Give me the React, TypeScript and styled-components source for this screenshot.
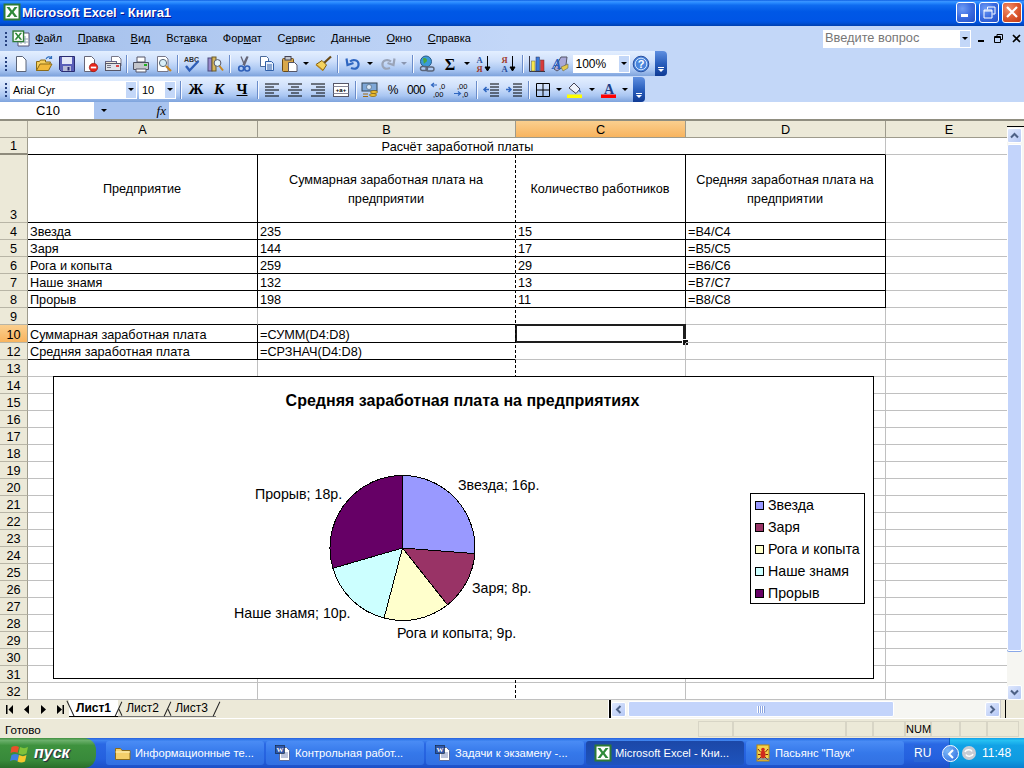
import React from "react";
import styled, { createGlobalStyle } from "styled-components";

const Global = createGlobalStyle`
  html, body { margin: 0; padding: 0; background: #ece9d8; }
  #root { width: 1024px; height: 768px; overflow: hidden; }
  * { box-sizing: border-box; }
`;

const Window = styled.div`
  width: 1024px; height: 768px; display: flex; flex-direction: column;
  font-family: "Liberation Sans", Arial, sans-serif; color: #000; overflow: hidden;
`;

/* ---------- title bar ---------- */
const TitleBar = styled.div`
  height: 26px; flex: none; display: flex; align-items: center; padding: 0 2px 2px 3px;
  background: linear-gradient(180deg, #0a5be0 0%, #3a93ff 5%, #2a8cff 10%, #0f6cf0 20%, #0058e6 45%, #0055e5 80%, #0050d8 88%, #0040b0 100%);
`;
const TitleText = styled.div`
  margin-left: 1px; color: #fff; font: bold 13px "Liberation Sans", sans-serif; letter-spacing: -0.1px;
  text-shadow: 1px 1px 0 #0f1089; white-space: nowrap;
`;
const TitleButtons = styled.div`
  margin-left: auto; display: flex; gap: 3px;
`;
const WinBtn = styled.div<{ $close?: boolean }>`
  width: 20px; height: 21px; border: 1px solid #fff; border-radius: 3px; display: flex; align-items: center; justify-content: center;
  background: ${(p) => (p.$close
    ? "radial-gradient(circle at 30% 30%, #f09070, #dd5a30 50%, #c03a14 100%)"
    : "radial-gradient(circle at 30% 30%, #6f9cf5, #3a6be0 50%, #2350c8 100%)")};
`;

/* ---------- menu + toolbars ---------- */
const CommandArea = styled.div`
  height: 76px; flex: none; display: flex; flex-direction: column;
  background: linear-gradient(90deg, #a3bfeb 0%, #c3d7f8 50%, #c3d7f8 100%);
`;
const MenuBar = styled.div`
  height: 25px; flex: none; display: flex; align-items: center; padding-left: 5px;
`;
const Grip = styled.div`
  width: 2px; height: 14px; margin-right: 2px; flex: none;
  background: repeating-linear-gradient(180deg, #27417e 0 2px, transparent 2px 4px);
`;
const MenuLogo = styled.div`
  width: 18px; height: 18px; margin-left: 3px; margin-right: 5px; flex: none; display: flex;
`;
const MenuItem = styled.span`
  font-size: 11px; margin: -2px 15.7px 0 0; white-space: nowrap;
`;
const SearchBox = styled.div`
  margin-left: auto; width: 148px; height: 18px; background: #fff; display: flex; align-items: center;
  font-size: 12.8px; color: #777; padding-left: 2px;
`;
const SearchLabel = styled.span`
  margin-top: -2px;
`;
const ComboBtn = styled.div<{ $w?: number }>`
  margin-left: auto; width: ${(p) => p.$w ?? 12}px; height: 100%; background: #c3d7f8; border: 1px solid #fff;
  display: flex; align-items: center; justify-content: center; flex: none;
`;
const MdiButtons = styled.div`
  width: 53px; display: flex; justify-content: space-between; align-items: center; padding: 0 3px 0 6px; flex: none;
`;
const Toolbar = styled.div<{ $w: number; $h: number }>`
  width: ${(p) => p.$w}px; height: ${(p) => p.$h}px; flex: none; display: flex; align-items: center; padding-left: 5px;
  margin-bottom: 1px;
  border-radius: 0 4px 4px 0;
  background: linear-gradient(180deg, #e3efff 0%, #cfe0fb 40%, #a9c6f2 75%, #7ea3dc 100%);
`;
const ToolBtn = styled.div<{ $w?: number }>`
  width: ${(p) => p.$w ?? 23}px; height: 100%; flex: none; display: flex; align-items: center; justify-content: center;
`;
const GlyphBtn = styled(ToolBtn)<{ $bold?: boolean; $italic?: boolean; $under?: boolean }>`
  font: ${(p) => (p.$italic ? "italic " : "")}bold 15px "Liberation Serif", serif;
  text-decoration: ${(p) => (p.$under ? "underline" : "none")};
`;
const SymbolBtn = styled(ToolBtn)<{ $track?: number }>`
  font-size: 12px; letter-spacing: ${(p) => p.$track ?? 0}px; white-space: nowrap;
`;
const Sep = styled.div<{ $w?: number }>`
  width: ${(p) => p.$w ?? 6}px; height: 100%; flex: none; display: flex; align-items: center; justify-content: center;
  &::before { content: ""; width: 1px; height: 18px; background: #6a8cca; box-shadow: 1px 0 0 #f4f8ff; }
`;
const Arrow = styled.span<{ $c?: string }>`
  width: 0; height: 0; border-left: 3px solid transparent; border-right: 3px solid transparent;
  border-top: 3px solid ${(p) => p.$c ?? "#000"}; display: block; flex: none;
`;
const Combo = styled.div<{ $w: number; $ml?: number; $size?: number }>`
  width: ${(p) => p.$w}px; margin-left: ${(p) => p.$ml ?? 0}px; height: 18px; flex: none; background: #fff; display: flex; align-items: center;
  font-size: ${(p) => p.$size ?? 12}px; padding-left: 3px;
`;
const EndCap = styled.div`
  margin-left: auto; width: 12px; height: 100%; flex: none; border-radius: 0 4px 4px 0; display: flex; flex-direction: column; align-items: center; justify-content: flex-end; padding-bottom: 4px; gap: 1px;
  background: linear-gradient(180deg, #5f8fe0 0%, #2a5fbd 50%, #0f3a94 100%);
  &::before { content: ""; width: 6px; height: 1px; background: #fff; }
`;

/* ---------- name box ---------- */
const FormulaRow = styled.div`
  height: 17px; flex: none; display: flex; background: #fff;
`;
const NameBox = styled.div`
  width: 92px; margin-left: 2px; text-align: center; font-size: 13px; line-height: 17px;
`;
const NameDrop = styled.div`
  width: 75px; background: #a8c3ef; display: flex; align-items: center; padding-left: 7px; justify-content: space-between; padding-right: 3px;
`;
const Fx = styled.span`
  font: italic 13px "Liberation Serif", serif;
`;

/* ---------- sheet ---------- */
const SheetArea = styled.div`
  height: 581px; flex: none; display: flex; border-top: 2px solid #908e80; background: #fff;
`;
const Sheet = styled.div`
  width: 1007px; position: relative; flex: none; overflow: hidden;
  display: grid; grid-template-columns: 28px 230px 258px 170px 200px 127px; align-content: start;
  font-size: 12.7px;
`;
const Corner = styled.div`
  height: 17px; background: #ece9d8; border-right: 1px solid #aca899; border-bottom: 1px solid #aca899;
`;
const ColHead = styled.div<{ $on?: boolean }>`
  height: 17px; text-align: center; line-height: 18px; color: #000;
  background: ${(p) => (p.$on ? "linear-gradient(180deg,#fbcf8e,#f8b45f)" : "#ece9d8")};
  border-right: 1px solid #9e9b8c; border-bottom: 1px solid #9e9b8c;
`;
const RowHead = styled.div<{ $h: number; $on?: boolean; $thick?: boolean }>`
  height: ${(p) => p.$h}px; text-align: center; display: flex; align-items: flex-end; justify-content: center; line-height: 14px;
  background: ${(p) => (p.$on ? "linear-gradient(180deg,#fbcf8e,#f8b45f)" : "#ece9d8")};
  border-right: 1px solid #9e9b8c; border-bottom: ${(p) => (p.$thick ? "2px solid #8e8b7c" : "1px solid #b8b5a6")};
`;
const Cell = styled.div<{ $h: number; $r: string; $b: string; $span?: number; $center?: boolean; $mid?: boolean; $sel?: boolean }>`
  height: ${(p) => p.$h}px; border-right: 1px solid ${(p) => p.$r}; border-bottom: 1px solid ${(p) => p.$b};
  ${(p) => (p.$span ? `grid-column: span ${p.$span};` : "")}
  display: flex; overflow: visible; white-space: nowrap; line-height: 14px; padding-left: 2px;
  align-items: ${(p) => (p.$center ? "center" : "flex-end")};
  ${(p) => (p.$mid ? "justify-content: center;" : "")}
  ${(p) => (p.$center ? "justify-content: center; text-align: center; white-space: normal; padding: 2px 9px 0 8px; line-height: 19px;" : "")}
  position: relative;
  ${(p) => (p.$sel ? `
    &::before { content: ""; position: absolute; left: -1px; top: -1px; right: -1px; bottom: -1px; border: 2px solid #1e1e1e; border-right-width: 3px; border-bottom-width: 2px; }
    &::after { content: ""; position: absolute; right: -3px; bottom: -3px; width: 5px; height: 5px; background: #111; border: 1px solid #fff; border-right: 0; border-bottom: 0; }
  ` : "")}
`;
const PageBreak = styled.div`
  position: absolute; left: 515px; top: 34px; bottom: 0; width: 1px;
  background: repeating-linear-gradient(180deg, #000 0 3px, transparent 3px 5px);
`;
const ChartPanel = styled.div`
  position: absolute; left: 53px; top: 255px; width: 821px; height: 303px; background: #fff; border: 1px solid #000; display: flex;
`;

/* scrollbars */
const VScroll = styled.div`
  width: 17px; flex: none; display: flex; flex-direction: column; background: #f6f6f2; padding-right: 2px;
`;
const VSplit = styled.div`
  height: 6px; flex: none; background: #ece9d8; border-bottom: 1px solid #000; margin: 0 -2px 1px 0;
`;
const ScrollBtn = styled.div`
  width: 15px; height: 15px; flex: none; background: linear-gradient(135deg, #dfe8fd, #b5c8f5); border: 1px solid #fff; border-radius: 2px; display: flex; align-items: center; justify-content: center;
`;
const VThumb = styled.div`
  height: 507px; width: 15px; flex: none; margin-top: 1px; background: #c3d4fb; border: 1px solid #fff; border-radius: 2px; box-shadow: 0 1px 0 #8aa8e8;
`;
const VTrack = styled.div`
  flex: 1;
`;

/* tabs */
const TabStrip = styled.div`
  height: 18px; flex: none; display: flex; align-items: stretch; background: #ece9d8;
`;
const TabNav = styled.div`
  width: 67px; flex: none; display: flex; align-items: center; padding-left: 6px; gap: 8.5px;
`;
const Tabs = styled.div`
  display: flex; align-items: flex-start; width: 542px; flex: none;
`;
const Tab = styled.div<{ $on?: boolean }>`
  position: relative; height: 17px; display: flex; align-items: center; justify-content: center;
  width: 49px; font-size: 12px; font-weight: ${(p) => (p.$on ? 700 : 400)};
  margin-left: ${(p) => (p.$on ? 2 : 0)}px;
  background: ${(p) => (p.$on ? "#fff" : "transparent")};
  border-bottom: 1px solid ${(p) => (p.$on ? "#000" : "#777")};
  &::before {
    content: ""; position: absolute; width: 1px; background: #222; transform: rotate(-25deg);
    left: ${(p) => (p.$on ? 1 : 2)}px; top: ${(p) => (p.$on ? 0 : 9)}px; height: ${(p) => (p.$on ? 17 : 7)}px;
  }
  &::after { content: ""; position: absolute; right: -1px; top: 1px; height: 16px; width: 1px; background: #222; transform: rotate(25deg); z-index: 1; }
`;
const Splitter = styled.div`
  width: 2px; flex: none; background: #000; box-shadow: -1px 0 0 #fff;
`;
const HScroll = styled.div`
  width: 389px; flex: none; display: flex; align-items: center; background: #f6f6f2; padding: 1px 0;
`;
const HThumb = styled.div`
  width: 266px; height: 100%; flex: none; margin-left: 2px; background: #c3d4fb; border: 1px solid #fff; border-radius: 2px; display: flex; align-items: center; justify-content: center;
`;
const HGrip = styled.div`
  width: 8px; height: 7px; background: repeating-linear-gradient(90deg, #fff 0 1px, #8aa4e0 1px 2px);
`;
const HFill = styled.div`
  flex: 1;
`;
const TabEnd = styled.div`
  width: 6px; flex: none; border-right: 1px solid #000; border-left: 1px solid #ccc;
`;

/* status */
const StatusBar = styled.div`
  height: 20px; flex: none; display: flex; align-items: center; background: #ece9d8; border-top: 1px solid #fff; font-size: 11.6px;
  padding: 2px 3px 1px 5px;
`;
const StatusText = styled.div`
  width: 693px; flex: none;
`;
const StatusCell = styled.div<{ $w: number }>`
  width: ${(p) => p.$w}px; height: 16px; flex: none; border: 1px solid #d8d5c6; font-size: 11px; line-height: 14px; padding-left: 0;
`;

/* task bar */
const TaskBar = styled.div`
  height: 30px; flex: none; display: flex; align-items: center; position: relative;
  background: linear-gradient(180deg, #2660dc 0%, #3f84f0 8%, #2a68e4 20%, #2460de 70%, #1d4fc6 100%);
`;
const StartBtn = styled.div`
  width: 96px; height: 30px; flex: none; display: flex; align-items: center; padding-left: 10px; gap: 5px; border-radius: 0 12px 12px 0;
  background: linear-gradient(180deg, #3f8f3f 0%, #6bb06b 8%, #3e923e 25%, #38893a 75%, #2a6e2a 100%);
  color: #fff; font: italic bold 16px "Liberation Sans", sans-serif; text-shadow: 1px 1px 1px #224;
`;
const TaskBtns = styled.div`
  display: flex; margin-left: 10px; gap: 2px;
`;
const TaskBtn = styled.div<{ $on?: boolean }>`
  width: 158px; height: 24px; flex: none; display: flex; align-items: center; gap: 3px; padding-left: 8px; border-radius: 3px;
  color: #fff; font-size: 11.2px; white-space: nowrap; overflow: hidden;
  background: ${(p) => (p.$on ? "linear-gradient(180deg,#1c48a8,#1e54bd)" : "linear-gradient(180deg,#4a8cf5,#3578ea 50%,#3270e2)")};
`;
const Lang = styled.div`
  position: absolute; left: 914px; top: 7px; width: 16px; height: 17px; background: #2a66d6; color: #fff; font-size: 12px; line-height: 17px; text-align: center;
`;
const Tray = styled.div`
  margin-left: auto; width: 75px; height: 30px; flex: none; display: flex; align-items: center; padding-left: 11px; gap: 5px; color: #fff; font-size: 12px; position: relative;
  background: linear-gradient(180deg, #12a0e8 0%, #26c0f2 8%, #12a2e6 25%, #0f9be0 75%, #0a7fcf 100%);
  border-left: 1px solid #0a5fc0;
`;
const TrayChevron = styled.div`
  position: absolute; left: -8px; top: 7px; width: 17px; height: 17px; border-radius: 50%; border: 1px solid #fff; display: flex; align-items: center; justify-content: center;
  background: radial-gradient(circle at 30% 30%, #7db8f8, #2a6be0);
`;

/* ---------- icons ---------- */
const Svg = ({ s = 18, children }: { s?: number; children: React.ReactNode }) => (
  <svg width={s} height={s} viewBox="0 0 18 18">{children}</svg>
);
const XL = () => (
  <>
    <rect x="1.5" y="1.5" width="15" height="15" fill="#fff" stroke="#2f7a36" strokeWidth="2" />
    <path d="M3.5 4h3l2.5 3.5L11.5 4h3L10.6 9l3.900 5h-3L9 10.600 6.500 14h-3l3.900-5z" fill="#2f8a3a" />
  </>
);
const Icons: Record<string, React.ReactNode> = {
  new: <path d="M4.500 1.500h6l3.500 3.500v11.500h-9.500z" fill="#fff" stroke="#5b6478" />,
  open: (<>
    <path d="M1.500 6.500h3l1-1.500h5v2h5l-3 8.500H1.500z" fill="#f6cf5c" stroke="#8a6a18" />
    <path d="M5 9h12l-3.500 6.500H1.500z" fill="#f2b93b" stroke="#8a6a18" />
    <path d="M11 4c1.500-2.500 3.500-2.500 5-1.500M16.500 1v2.500H14" fill="none" stroke="#2f6fbe" strokeWidth="1.200" />
  </>),
  save: (<>
    <path d="M1.500 1.500h15v15h-13l-2-2z" fill="#5a5fb8" stroke="#2a2c70" />
    <rect x="4" y="2" width="10" height="7" fill="#e4e8f8" />
    <rect x="5" y="11" width="8" height="5" fill="#b8bcd8" />
    <rect x="9.500" y="12" width="2" height="3.500" fill="#2a2c70" />
  </>),
  perm: (<>
    <path d="M3.500 1.500h7l3 3v12h-10z" fill="#fff" stroke="#667" />
    <circle cx="12.500" cy="12.500" r="4.200" fill="#e8261c" stroke="#901008" strokeWidth=".6" />
    <rect x="9.800" y="11.600" width="5.400" height="1.800" fill="#fff" />
  </>),
  mail: (<>
    <path d="M7.500 1.500h7l2.500 2.500v7h-9.500z" fill="#fff" stroke="#778" />
    <rect x="1.500" y="6.500" width="11" height="8" fill="#eee8d8" stroke="#668" />
    <rect x="1.500" y="8.500" width="15" height="7" fill="#dfe3ea" stroke="#556" />
    <path d="M3 10.500h4M3 12.500h4" stroke="#778" />
    <rect x="12" y="10" width="3" height="2" fill="#d44" />
  </>),
  print: (<>
    <path d="M5 2h8v5H5z" fill="#fff" stroke="#556" />
    <path d="M1.500 7.500h15v7h-15z" fill="#c4c6cc" stroke="#4c5060" />
    <path d="M4 14h10v3H4z" fill="#fff" stroke="#556" />
    <rect x="12" y="9" width="3" height="2" fill="#22b022" />
  </>),
  preview: (<>
    <path d="M2.500 1.500h8l2.500 2.500v12.500H2.500z" fill="#fff" stroke="#778" />
    <circle cx="8" cy="8" r="3.600" fill="#d8eef8" stroke="#567" />
    <path d="M11 11l5 5" stroke="#c8861e" strokeWidth="2.200" />
  </>),
  spell: (<>
    <text x="1" y="6.500" fontSize="7" fontWeight="700" fill="#333" fontFamily="Liberation Sans">ABC</text>
    <path d="M3 11l3.500 4.500L15.500 6" fill="none" stroke="#2f5fb8" strokeWidth="2.400" />
  </>),
  research: (<>
    <rect x="2" y="3" width="4" height="13" fill="#9a8acc" stroke="#4a4a7a" />
    <rect x="6" y="2" width="4" height="14" fill="#d4b45c" stroke="#6a5a2a" />
    <circle cx="11.500" cy="8" r="3.400" fill="#e4f4fa" stroke="#556" />
    <path d="M13.500 11l3.500 4.500" stroke="#c8861e" strokeWidth="2" />
  </>),
  cut: (<>
    <path d="M6 1.500l3.500 8.500L13 1.500M12 1.500L8 10" fill="none" stroke="#667" strokeWidth="1.300" />
    <circle cx="6.200" cy="13.500" r="2.500" fill="none" stroke="#2f5fb8" strokeWidth="1.600" />
    <circle cx="12.200" cy="13.500" r="2.500" fill="none" stroke="#2f5fb8" strokeWidth="1.600" />
  </>),
  copy: (<>
    <path d="M2.500 1.500h6l2 2v8h-8z" fill="#fff" stroke="#4a6a9a" />
    <path d="M7.500 6.500h6l2 2v7h-8z" fill="#e8f0fc" stroke="#2f5fa8" />
    <path d="M9 10h5M9 12h5M9 14h5" stroke="#2f5fa8" />
  </>),
  paste: (<>
    <rect x="1.500" y="3.500" width="11" height="13" rx="1" fill="#d8a84c" stroke="#6a4a14" />
    <rect x="4" y="1.500" width="6" height="3.500" fill="#c4c8d0" stroke="#445" />
    <path d="M7.500 7.500h6l2.500 2.500v6.500H7.500z" fill="#fff" stroke="#556" />
  </>),
  painter: (<>
    <path d="M17 1.500L10 8" stroke="#6a4a14" strokeWidth="2.200" />
    <path d="M8 5.500L12.500 10 9 15.500 2 9.500z" fill="#f4d25c" stroke="#7a5a14" />
    <path d="M2 9.500L9 15.500" stroke="#b8861e" strokeWidth="1.500" />
  </>),
  undo: <path d="M7 13c5 2 8-.5 7.500-4.500C14 5 9 4 6 6.500M2.500 3.500l1 6.500 6-2" fill="none" stroke="#2f66c0" strokeWidth="2.200" />,
  redo: <path d="M11 13C6 15 3 12.500 3.500 8.500 4 5 9 4 12 6.500M15.500 3.500l-1 6.500-6-2" fill="none" stroke="#9aa4b8" strokeWidth="2.200" />,
  link: (<>
    <circle cx="8" cy="6.500" r="5.500" fill="#3a9ad8" stroke="#2a5a8a" />
    <path d="M5 3.500c2-1 4 0 4 2s-3 2-3 4" fill="#4aa83c" />
    <rect x="2.500" y="11.500" width="7" height="4" rx="2" fill="none" stroke="#5a6478" strokeWidth="1.400" />
    <rect x="8" y="12" width="8" height="4" rx="2" fill="none" stroke="#5a6478" strokeWidth="1.400" />
  </>),
  sigma: <text x="9" y="15" textAnchor="middle" fontSize="16" fontWeight="700" fontFamily="Liberation Serif">Σ</text>,
  az: (<>
    <text x="1.500" y="8" fontSize="8.500" fontWeight="700" fill="#2a4f9a" fontFamily="Liberation Serif">A</text>
    <text x="1.500" y="17" fontSize="8.500" fontWeight="700" fill="#a03a2a" fontFamily="Liberation Serif">Я</text>
    <path d="M12.500 1v13M10 12l2.500 4 2.500-4z" stroke="#000" />
  </>),
  za: (<>
    <text x="1.500" y="8" fontSize="8.500" fontWeight="700" fill="#a03a2a" fontFamily="Liberation Serif">Я</text>
    <text x="1.500" y="17" fontSize="8.500" fontWeight="700" fill="#2a4f9a" fontFamily="Liberation Serif">A</text>
    <path d="M12.500 1v13M10 12l2.500 4 2.500-4z" stroke="#000" />
  </>),
  chart: (<>
    <path d="M1.500 1v15.500H17" fill="none" stroke="#334" />
    <rect x="3.500" y="6" width="3.500" height="10" fill="#f8e84c" stroke="#664" strokeWidth=".5" />
    <rect x="8" y="2" width="3.500" height="14" fill="#3a7ad8" stroke="#335" strokeWidth=".5" />
    <rect x="12.500" y="5" width="3.500" height="11" fill="#d83a3a" stroke="#633" strokeWidth=".5" />
  </>),
  drawing: (<>
    <path d="M10 2h6l-1 8-9 6-3-2z" fill="#a8a8d8" stroke="#556" />
    <text x="1" y="14" fontSize="14" fontWeight="700" fontStyle="italic" fill="#2a5fbe" fontFamily="Liberation Serif">A</text>
    <path d="M10 12l7-3v4l-5 3z" fill="#e4c84c" stroke="#665" strokeWidth=".6" />
  </>),
  help: (<>
    <circle cx="9" cy="9" r="7.800" fill="#4a86dc" stroke="#2a50a0" />
    <circle cx="9" cy="9" r="5.800" fill="none" stroke="#cfe0fb" />
    <text x="9" y="13" textAnchor="middle" fontSize="11" fontWeight="700" fill="#fff" fontFamily="Liberation Sans">?</text>
  </>),
  left: <path d="M2 3h14M2 6h9M2 9h14M2 12h9M2 15h14" stroke="#000" />,
  center: <path d="M2 3h14M5 6h8M2 9h14M5 12h8M2 15h14" stroke="#000" />,
  right: <path d="M2 3h14M7 6h9M2 9h14M7 12h9M2 15h14" stroke="#000" />,
  merge: (<>
    <rect x="1.500" y="2.500" width="15" height="13" fill="#fff" stroke="#556" />
    <path d="M1.500 5.500h15M1.500 12.500h15" stroke="#889" />
    <text x="9" y="11" textAnchor="middle" fontSize="6" fontWeight="700" fontFamily="Liberation Sans">+a+</text>
  </>),
  money: (<>
    <rect x="1" y="2" width="15" height="8" fill="#7fa8d8" stroke="#345" />
    <circle cx="8" cy="6" r="2.500" fill="#d8e8f8" stroke="#345" strokeWidth=".5" />
    <ellipse cx="13" cy="11" rx="3.500" ry="1.500" fill="#f0c030" stroke="#7a5a10" strokeWidth=".7" />
    <ellipse cx="12" cy="14" rx="3.500" ry="1.500" fill="#f0c030" stroke="#7a5a10" strokeWidth=".7" />
    <path d="M2 13h5M2 15.500h5" stroke="#a06a10" strokeWidth="1.200" />
  </>),
  inc: (<>
    <path d="M7 4H2M4 2L1.500 4 4 6" fill="none" stroke="#2f66c0" strokeWidth="1.200" />
    <text x="9" y="7.500" fontSize="7.500" fontFamily="Liberation Sans">,0</text>
    <text x="3" y="16" fontSize="7.500" fontFamily="Liberation Sans">,00</text>
  </>),
  dec: (<>
    <text x="4" y="7.500" fontSize="7.500" fontFamily="Liberation Sans">,00</text>
    <path d="M1 12.500h6M5 10.500l2.500 2-2.500 2" fill="none" stroke="#2f66c0" strokeWidth="1.200" />
    <text x="9" y="16" fontSize="7.500" fontFamily="Liberation Sans">,0</text>
  </>),
  outdent: (<>
    <path d="M8 3h9M8 6h9M8 9h9M8 12h9M8 15h9" stroke="#000" />
    <path d="M7 8.500H2M4.500 6L2 8.500 4.500 11" fill="none" stroke="#2f66c0" strokeWidth="1.500" />
  </>),
  indent: (<>
    <path d="M8 3h9M8 6h9M8 9h9M8 12h9M8 15h9" stroke="#000" />
    <path d="M1 8.500h5M3.500 6L6 8.500 3.500 11" fill="none" stroke="#2f66c0" strokeWidth="1.500" />
  </>),
  borders: <path d="M2.500 2.500h13v13h-13zM9 2.500v13M2.500 9h13" fill="none" stroke="#000" />,
  fill: (<>
    <path d="M3 7l5-5 6 6-4 4.500z" fill="#eef2fa" stroke="#445" />
    <path d="M13 8c1.500 1.500 2.500 3 1.500 3.500S13 10 13 8z" fill="#2f66c0" />
    <rect x="1" y="13.500" width="15" height="3.500" fill="#ffff00" />
  </>),
  color: (<>
    <text x="9" y="12.500" textAnchor="middle" fontSize="14" fontWeight="700" fill="#1f3f88" fontFamily="Liberation Serif">A</text>
    <rect x="1" y="13.500" width="15" height="3.500" fill="#ff0000" />
  </>),
  folder: (<>
    <path d="M1.500 4.500h5l1.500 2h8v9h-14.500z" fill="#f4cf6a" stroke="#8a6a1a" />
    <path d="M1.500 8h14.500" stroke="#fff4c0" />
  </>),
  word: (<>
    <path d="M5.500 3.500h7l3 3v10h-10z" fill="#fff" stroke="#5a6a9a" />
    <path d="M7 9h7M7 11h7M7 13h7" stroke="#7a8ab8" />
    <rect x="1.500" y="1.500" width="9" height="8" fill="#2f56a8" stroke="#123" strokeWidth=".6" />
    <text x="6" y="8" textAnchor="middle" fontSize="7" fontWeight="700" fill="#fff" fontFamily="Liberation Serif">W</text>
  </>),
  spider: (<>
    <rect x="3" y="1" width="12" height="16" fill="#f4d24c" stroke="#b8860b" />
    <ellipse cx="9" cy="10.500" rx="2.500" ry="4" fill="#d02a1c" />
    <circle cx="9" cy="5.500" r="1.800" fill="#d02a1c" />
    <path d="M6.500 8L4 5M6.500 10.500H4M7 13l-3 3M11.500 8L14 5M11.500 10.500H14M11 13l3 3" stroke="#802010" />
    <path d="M3 15h12" stroke="#3a6ac8" />
  </>),
};

const I = ({ n }: { n: string }) => <Svg>{Icons[n]}</Svg>;
const B = ({ n, w }: { n: string; w?: number }) => (<ToolBtn $w={w}><I n={n} /></ToolBtn>);
const D = ({ w = 11, c }: { w?: number; c?: string }) => (<ToolBtn $w={w}><Arrow $c={c} /></ToolBtn>);

const WinLogo = () => (
  <svg width="19" height="19" viewBox="0 0 19 19">
    <path d="M1 4c3-1.500 5-1.500 7.500 0l-1.500 6C5 8.500 3 8.500 0 10z" fill="#e8502a" transform="translate(0.500 -1)" />
    <path d="M10 3c3 1.500 5 1.500 8 0l-1.500 6.500c-3 1.500-5 1.500-8 0z" fill="#7fc23a" />
    <path d="M0 11c3-1.500 5-1.500 7.500 0L6 17c-2.500-1.500-4.500-1.500-7.500 0z" fill="#3f7fe0" transform="translate(1.500 0)" />
    <path d="M9 11c3 1.500 5 1.500 7.500 0L15 17.500c-3 1.500-5 1-7.500 0z" fill="#f6c82c" />
  </svg>
);

/* ---------- sheet data ---------- */
const GRID = "#c0c0c0";
const BLACK = "#000";
const WHITE = "#fff";
type Row = { n: number; h: number; cells: (string | null)[]; kind: "data" | "head" | "sum" | "plain" };
const rows: Row[] = [
  { n: 3, h: 68, kind: "head", cells: ["Предприятие", "Суммарная заработная плата на предприятии", "Количество работников", "Средняя заработная плата на предприятии"] },
  { n: 4, h: 17, kind: "data", cells: ["Звезда", "235", "15", "=B4/C4"] },
  { n: 5, h: 17, kind: "data", cells: ["Заря", "144", "17", "=B5/C5"] },
  { n: 6, h: 17, kind: "data", cells: ["Рога и копыта", "259", "29", "=B6/C6"] },
  { n: 7, h: 17, kind: "data", cells: ["Наше знамя", "132", "13", "=B7/C7"] },
  { n: 8, h: 17, kind: "data", cells: ["Прорыв", "198", "11", "=B8/C8"] },
  { n: 9, h: 17, kind: "plain", cells: [null, null, null, null] },
  { n: 10, h: 18, kind: "sum", cells: ["Суммарная заработная плата", "=СУММ(D4:D8)", null, null] },
  { n: 12, h: 17, kind: "sum", cells: ["Средняя заработная плата", "=СРЗНАЧ(D4:D8)", null, null] },
  ...Array.from({ length: 20 }, (_, i) => ({ n: 13 + i, h: 17, kind: "plain" as const, cells: [null, null, null, null] })),
];

const cellBorders = (r: Row, c: number) => {
  let right = GRID, bottom = GRID;
  if (r.kind === "head" || r.kind === "data") { right = BLACK; bottom = BLACK; }
  if (r.kind === "sum" && c < 2) { right = BLACK; bottom = BLACK; }
  if (r.n === 9 && c < 2) bottom = BLACK;
  if (c === 1) right = WHITE;
  return { right, bottom };
};

const slices = [
  { v: 16, c: "#9999ff" }, { v: 8, c: "#993366" }, { v: 9, c: "#ffffcc" }, { v: 10, c: "#ccffff" }, { v: 18, c: "#660066" },
];
const legend = [
  { t: "Звезда", c: "#9999ff", y: 505.5 }, { t: "Заря", c: "#993366", y: 527.5 }, { t: "Рога и копыта", c: "#ffffcc", y: 549.5 },
  { t: "Наше знамя", c: "#ccffff", y: 571.5 }, { t: "Прорыв", c: "#660066", y: 593.5 },
];
const labels = [
  { t: "Звезда; 16р.", x: 458, y: 490 }, { t: "Заря; 8р.", x: 472, y: 593 }, { t: "Рога и копыта; 9р.", x: 397, y: 638 },
  { t: "Наше знамя; 10р.", x: 234, y: 618 }, { t: "Прорыв; 18р.", x: 255, y: 499 },
];

const Chart = () => {
  const cx = 402.5, cy = 548, r = 72.5;
  const total = slices.reduce((a, s) => a + s.v, 0);
  let acc = 0;
  const pt = (a: number) => [cx + r * Math.sin(a), cy - r * Math.cos(a)];
  return (
    <svg width="819" height="301" viewBox="54 377 819 301" fontFamily="Liberation Sans, sans-serif" fontSize="14.2">
      <text x="462.500" y="406" textAnchor="middle" fontSize="16" fontWeight="700">Средняя заработная плата на предприятиях</text>
      {slices.map((s) => {
        const a0 = (acc / total) * Math.PI * 2;
        acc += s.v;
        const a1 = (acc / total) * Math.PI * 2;
        const [x0, y0] = pt(a0);
        const [x1, y1] = pt(a1);
        return <path key={s.c} d={`M${cx} ${cy}L${x0} ${y0}A${r} ${r} 0 ${a1 - a0 > Math.PI ? 1 : 0} 1 ${x1} ${y1}Z`} fill={s.c} stroke="#000" shapeRendering="crispEdges" />;
      })}
      {labels.map((l) => <text key={l.t} x={l.x} y={l.y}>{l.t}</text>)}
      <rect x="750.500" y="493.500" width="113.500" height="110" fill="#fff" stroke="#000" shapeRendering="crispEdges" />
      {legend.map((l) => (
        <g key={l.t}>
          <rect x="755.500" y={l.y - 4.5} width="8" height="8" fill={l.c} stroke="#000" shapeRendering="crispEdges" />
          <text x="768" y={l.y + 4.5}>{l.t}</text>
        </g>
      ))}
    </svg>
  );
};

const menu: [string, string, string][] = [
  ["", "Ф", "айл"], ["", "П", "равка"], ["", "В", "ид"], ["Вст", "а", "вка"], ["Фор", "м", "ат"],
  ["С", "е", "рвис"], ["", "Д", "анные"], ["", "О", "кно"], ["", "С", "правка"],
];

export default function App() {
  return (
    <Window>
      <Global />
      <TitleBar>
        <Svg><XL /></Svg>
        <TitleText>Microsoft Excel - Книга1</TitleText>
        <TitleButtons>
          <WinBtn><svg width="10" height="12" viewBox="0 0 10 12"><rect x="0" y="8" width="7" height="3" fill="#fff" /></svg></WinBtn>
          <WinBtn><svg width="13" height="13" viewBox="0 0 13 13"><path d="M4.500 3.500v-2.500h7.500v7h-2.500M1 4h8v8H1zM1 5h8" fill="none" stroke="#fff" /></svg></WinBtn>
          <WinBtn $close><svg width="12" height="12" viewBox="0 0 12 12"><path d="M1 1l10 10M11 1L1 11" stroke="#fff" strokeWidth="2.200" /></svg></WinBtn>
        </TitleButtons>
      </TitleBar>

      <CommandArea>
        <MenuBar>
          <Grip />
          <MenuLogo>
            <svg width="18" height="18" viewBox="0 0 18 18">
              <path d="M6 3h11v13H6z" fill="#fff" stroke="#557" />
              <path d="M13 6v8M9 6v8M7 9h9M7 12h9" stroke="#9ab" />
              <g transform="scale(.7)"><XL /></g>
            </svg>
          </MenuLogo>
          {menu.map(([a, b, c]) => (<MenuItem key={a + b + c}>{a}<u>{b}</u>{c}</MenuItem>))}
          <SearchBox><SearchLabel>Введите вопрос</SearchLabel><ComboBtn><Arrow /></ComboBtn></SearchBox>
          <MdiButtons>
            <svg width="8" height="8" viewBox="0 0 8 8"><rect x="1" y="5" width="6" height="2" /></svg>
            <svg width="9" height="9" viewBox="0 0 9 9"><path d="M3 2V.5h5.500v5H7M.5 2.500h6v6h-6zM.5 3.500h6" fill="none" stroke="#000" /></svg>
            <svg width="9" height="9" viewBox="0 0 9 9"><path d="M1 1l7 7M8 1L1 8" stroke="#000" strokeWidth="1.700" /></svg>
          </MdiButtons>
        </MenuBar>
        <Toolbar $w={667} $h={25}>
          <Grip />
          <B n="new" /><B n="open" /><B n="save" /><B n="perm" /><B n="mail" /><Sep $w={5} />
          <B n="print" /><B n="preview" /><Sep $w={5} />
          <B n="spell" /><B n="research" /><Sep />
          <B n="cut" /><B n="copy" /><B n="paste" /><D w={10} /><B n="painter" /><Sep $w={7} />
          <B n="undo" /><D w={12} /><B n="redo" /><D w={10.500} c="#8a96b0" /><Sep $w={5.500} />
          <B n="link" /><B n="sigma" /><D /><B n="az" /><ToolBtn $w={2} /><B n="za" /><Sep $w={5} />
          <B n="chart" /><B n="drawing" />
          <Combo $w={57} $ml={1.500}>100%<ComboBtn><Arrow /></ComboBtn></Combo>
          <B n="help" />
          <EndCap><Arrow $c="#fff" /></EndCap>
        </Toolbar>
        <Toolbar $w={645} $h={25}>
          <Grip />
          <Combo $w={127} $ml={1} $size={11}>Arial Cyr<ComboBtn><Arrow /></ComboBtn></Combo>
          <Combo $w={37} $ml={2} $size={11}>10<ComboBtn><Arrow /></ComboBtn></Combo>
          <Sep $w={8.500} />
          <GlyphBtn>Ж</GlyphBtn><GlyphBtn $italic>К</GlyphBtn><GlyphBtn $under>Ч</GlyphBtn><Sep $w={7} />
          <B n="left" /><B n="center" /><B n="right" /><B n="merge" /><Sep />
          <B n="money" /><SymbolBtn>%</SymbolBtn><SymbolBtn $track={-0.7}>000</SymbolBtn><B n="inc" /><B n="dec" /><Sep />
          <B n="outdent" /><B n="indent" /><Sep />
          <B n="borders" w={22} /><D w={10} /><B n="fill" w={22} /><D w={12} /><B n="color" w={22} /><D />
          <EndCap><Arrow $c="#fff" /></EndCap>
        </Toolbar>
      </CommandArea>

      <FormulaRow>
        <NameBox>C10</NameBox>
        <NameDrop><Arrow /><Fx>fx</Fx></NameDrop>
      </FormulaRow>

      <SheetArea>
        <Sheet>
          <Corner />
          {["A", "B", "C", "D", "E"].map((c) => (<ColHead key={c} $on={c === "C"}>{c}</ColHead>))}

          <RowHead $h={17} $thick>1</RowHead>
          <Cell $h={17} $span={4} $r={GRID} $b={BLACK} $mid>Расчёт заработной платы</Cell>
          <Cell $h={17} $r={GRID} $b={GRID} />

          {rows.map((r) => (
            <React.Fragment key={r.n}>
              <RowHead $h={r.h} $on={r.n === 10}>{r.n}</RowHead>
              {r.cells.map((t, c) => {
                const { right, bottom } = cellBorders(r, c);
                return (
                  <Cell key={c} $h={r.h} $r={right} $b={bottom} $center={r.kind === "head"} $sel={r.n === 10 && c === 2}>{t}</Cell>
                );
              })}
              <Cell $h={r.h} $r={GRID} $b={GRID} />
            </React.Fragment>
          ))}

          <PageBreak />
          <ChartPanel><Chart /></ChartPanel>
        </Sheet>
        <VScroll>
          <VSplit />
          <ScrollBtn><svg width="9" height="7" viewBox="0 0 9 7"><path d="M1 5.500l3.500-3.500 3.500 3.500" fill="none" stroke="#4d6185" strokeWidth="2" /></svg></ScrollBtn>
          <VThumb />
          <VTrack />
          <ScrollBtn><svg width="9" height="7" viewBox="0 0 9 7"><path d="M1 1.500l3.500 3.500 3.500-3.500" fill="none" stroke="#4d6185" strokeWidth="2" /></svg></ScrollBtn>
        </VScroll>
      </SheetArea>

      <TabStrip>
        <TabNav>
          <svg width="58" height="9" viewBox="0 0 58 9">
            <path d="M0 0h1.500v9H0zM7 0v9L2.500 4.500zM23 0v9l-5-4.500zM35 0v9l5-4.500zM51 0v9l5-4.500zM56.500 0H58v9h-1.500z" />
          </svg>
        </TabNav>
        <Tabs>
          <Tab $on>Лист1</Tab>
          <Tab>Лист2</Tab>
          <Tab>Лист3</Tab>
        </Tabs>
        <Splitter />
        <HScroll>
          <ScrollBtn><svg width="7" height="9" viewBox="0 0 7 9"><path d="M5.500 1L2 4.500 5.500 8" fill="none" stroke="#4d6185" strokeWidth="2" /></svg></ScrollBtn>
          <HThumb><HGrip /></HThumb>
          <HFill />
          <ScrollBtn><svg width="7" height="9" viewBox="0 0 7 9"><path d="M1.500 1L5 4.500 1.500 8" fill="none" stroke="#4d6185" strokeWidth="2" /></svg></ScrollBtn>
        </HScroll>
        <TabEnd />
      </TabStrip>

      <StatusBar>
        <StatusText>Готово</StatusText>
        <StatusCell $w={35} />
        <StatusCell $w={113} />
        <StatusCell $w={27} />
        <StatusCell $w={32} />
        <StatusCell $w={26}>NUM</StatusCell>
        <StatusCell $w={29} />
        <StatusCell $w={27} />
        <StatusCell $w={32} />
      </StatusBar>

      <TaskBar>
        <StartBtn><WinLogo />пуск</StartBtn>
        <TaskBtns>
          <TaskBtn><I n="folder" />Информационные те...</TaskBtn>
          <TaskBtn><I n="word" />Контрольная работ...</TaskBtn>
          <TaskBtn><I n="word" />Задачи к экзамену -...</TaskBtn>
          <TaskBtn $on><Svg><XL /></Svg>Microsoft Excel - Кни...</TaskBtn>
          <TaskBtn><I n="spider" />Пасьянс "Паук"</TaskBtn>
        </TaskBtns>
        <Lang>RU</Lang>
        <Tray>
          <TrayChevron><svg width="8" height="10" viewBox="0 0 8 10"><path d="M6 1L2 5l4 4" fill="none" stroke="#fff" strokeWidth="2" /></svg></TrayChevron>
          <svg width="16" height="16" viewBox="0 0 16 16"><circle cx="8" cy="8" r="7" fill="#c8ccd4" /><path d="M4 7c1-3 6-3 7-.5M12 9c-1 3-6 3-7 .5" fill="none" stroke="#fff" strokeWidth="1.500" /></svg>
          <span>11:48</span>
        </Tray>
      </TaskBar>
    </Window>
  );
}
